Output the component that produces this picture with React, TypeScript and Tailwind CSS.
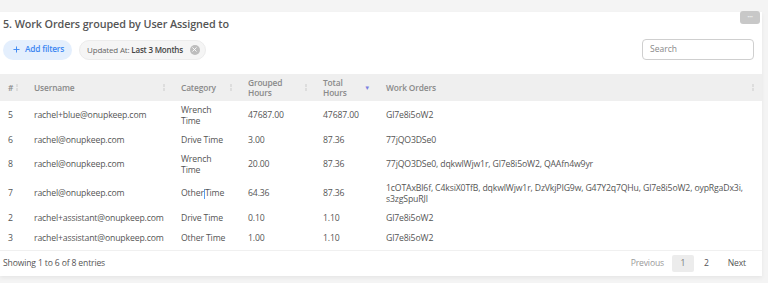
import { Plus, X } from "lucide-react";

const rows = [
  { id: "5", user: "rachel+blue@onupkeep.com", cat: "Wrench Time", grouped: "47687.00", total: "47687.00", orders: "Gl7e8i5oW2" },
  { id: "6", user: "rachel@onupkeep.com", cat: "Drive Time", grouped: "3.00", total: "87.36", orders: "77jQO3DSe0" },
  { id: "8", user: "rachel@onupkeep.com", cat: "Wrench Time", grouped: "20.00", total: "87.36", orders: "77jQO3DSe0, dqkwlWjw1r, Gl7e8i5oW2, QAAfn4w9yr" },
  {
    id: "7",
    user: "rachel@onupkeep.com",
    cat: "Other Time",
    grouped: "64.36",
    total: "87.36",
    orders: "1cOTAxBl6f, C4ksiX0TfB, dqkwlWjw1r, DzVkjPIG9w, G47Y2q7QHu, Gl7e8i5oW2, oypRgaDx3i, s3zgSpuRJl",
  },
  { id: "2", user: "rachel+assistant@onupkeep.com", cat: "Drive Time", grouped: "0.10", total: "1.10", orders: "Gl7e8i5oW2" },
  { id: "3", user: "rachel+assistant@onupkeep.com", cat: "Other Time", grouped: "1.00", total: "1.10", orders: "Gl7e8i5oW2" },
];

const SortIcon = ({ active }: { active?: boolean }) =>
  active ? (
    <span className="text-[6px] leading-none text-[#7b7fe0]">▼</span>
  ) : (
    <span className="flex flex-col items-center gap-[1px] opacity-70">
      <span className="block w-[2px] h-[3px] bg-[#d6d6d6]" />
      <span className="block w-[2px] h-[3px] bg-[#d6d6d6]" />
    </span>
  );

const Th = ({ children, active }: { children: React.ReactNode; active?: boolean }) => (
  <th className="px-[8px] text-left font-semibold align-middle text-[8.4px]">
    <div className="flex items-center justify-between">
      <span className="leading-[10px]">{children}</span>
      <SortIcon active={active} />
    </div>
  </th>
);

const cell = "px-[8px] py-[3.5px] leading-[11px]";

export default function App() {
  return (
    <div
      className="h-[283px] w-[768px] bg-[#f4f4f4] pt-[12px] pr-[6px] overflow-hidden text-[#555]"
      style={{ fontFamily: "'Open Sans', 'Noto Sans', sans-serif" }}
    >
      <div className="relative bg-white shadow-[0_2px_4px_rgba(0,0,0,0.06)] pt-[4px]">
        <button className="absolute -top-[1px] right-[2px] h-[13px] w-[20px] rounded-[3px] bg-[#c8c8c8] text-[#eee] text-[6px] leading-[13px] tracking-[-0.5px]">
          •••
        </button>

        <h2 className="pl-[3px] text-[10.8px] leading-[16px] font-semibold tracking-[-0.1px] text-[#555]">
          5. Work Orders grouped by User Assigned to
        </h2>

        <div className="mt-[7px] flex items-center pl-[3px] pr-[8px]">
          <button className="flex h-[20px] items-center gap-[4px] rounded-full bg-[#e4effd] pl-[9px] pr-[8px] text-[8.3px] font-semibold tracking-[-0.2px] text-[#3b86f2]">
            <Plus className="h-[9px] w-[9px]" strokeWidth={2.5} />
            Add filters
          </button>
          <div className="ml-[7px] flex h-[20px] items-center rounded-full border border-[#ececec] bg-[#f5f5f5] pl-[7px] pr-[5px] text-[8px] tracking-[-0.2px]">
            <span className="text-[#666]">Updated At:</span>
            <span className="ml-[2px] font-semibold text-[#444]">Last 3 Months</span>
            <span className="ml-[7px] flex h-[10px] w-[10px] items-center justify-center rounded-full bg-[#bdbdbd]">
              <X className="h-[7px] w-[7px] text-white" strokeWidth={3} />
            </span>
          </div>
          <div className="ml-auto flex h-[21px] w-[112px] items-center rounded-[4px] border border-[#cfcfcf] px-[7px] text-[8.5px] text-[#888]">
            Search
          </div>
        </div>

        <table className="mt-[14px] w-[762px] table-fixed border-collapse text-[8.7px] tracking-[-0.15px]">
          <colgroup>
            <col className="w-[26px]" />
            <col className="w-[147px]" />
            <col className="w-[67px]" />
            <col className="w-[75px]" />
            <col className="w-[63px]" />
            <col />
          </colgroup>
          <thead>
            <tr className="h-[27px] bg-[#efefef] text-[#8a8a8a]">
              <Th>#</Th>
              <Th>Username</Th>
              <Th>Category</Th>
              <Th>
                Grouped
                <br />
                Hours
              </Th>
              <Th active>
                Total
                <br />
                Hours
              </Th>
              <Th>Work Orders</Th>
            </tr>
          </thead>
          <tbody>
            {rows.map((r) => (
              <tr key={r.id} className="h-[20px] align-middle">
                <td className={cell}>{r.id}</td>
                <td className={cell}>{r.user}</td>
                <td className="pl-[8px] pr-[14px] py-[3.5px] leading-[11px]">
                  {r.id === "7" ? (
                    <>
                      Other<span className="inline-block h-[10px] w-[1px] align-middle bg-[#5aa0f0]" />Time
                    </>
                  ) : (
                    r.cat
                  )}
                </td>
                <td className={cell}>{r.grouped}</td>
                <td className={cell}>{r.total}</td>
                <td className={cell}>{r.orders}</td>
              </tr>
            ))}
          </tbody>
        </table>

        <div className="mt-[2px] flex h-[26px] items-center border-t border-[#f0f0f0] pl-[3px] pr-[16px] text-[8.6px] tracking-[-0.15px]">
          <span>Showing 1 to 6 of 8 entries</span>
          <div className="ml-auto flex items-center">
            <span className="mr-[8px] text-[#999]">Previous</span>
            <span className="flex h-[17px] w-[22px] items-center justify-center rounded-[2px] bg-[#ececec] text-[#777]">1</span>
            <span className="ml-[10px] text-[#555]">2</span>
            <span className="ml-[19px] text-[#555]">Next</span>
          </div>
        </div>
      </div>
    </div>
  );
}
